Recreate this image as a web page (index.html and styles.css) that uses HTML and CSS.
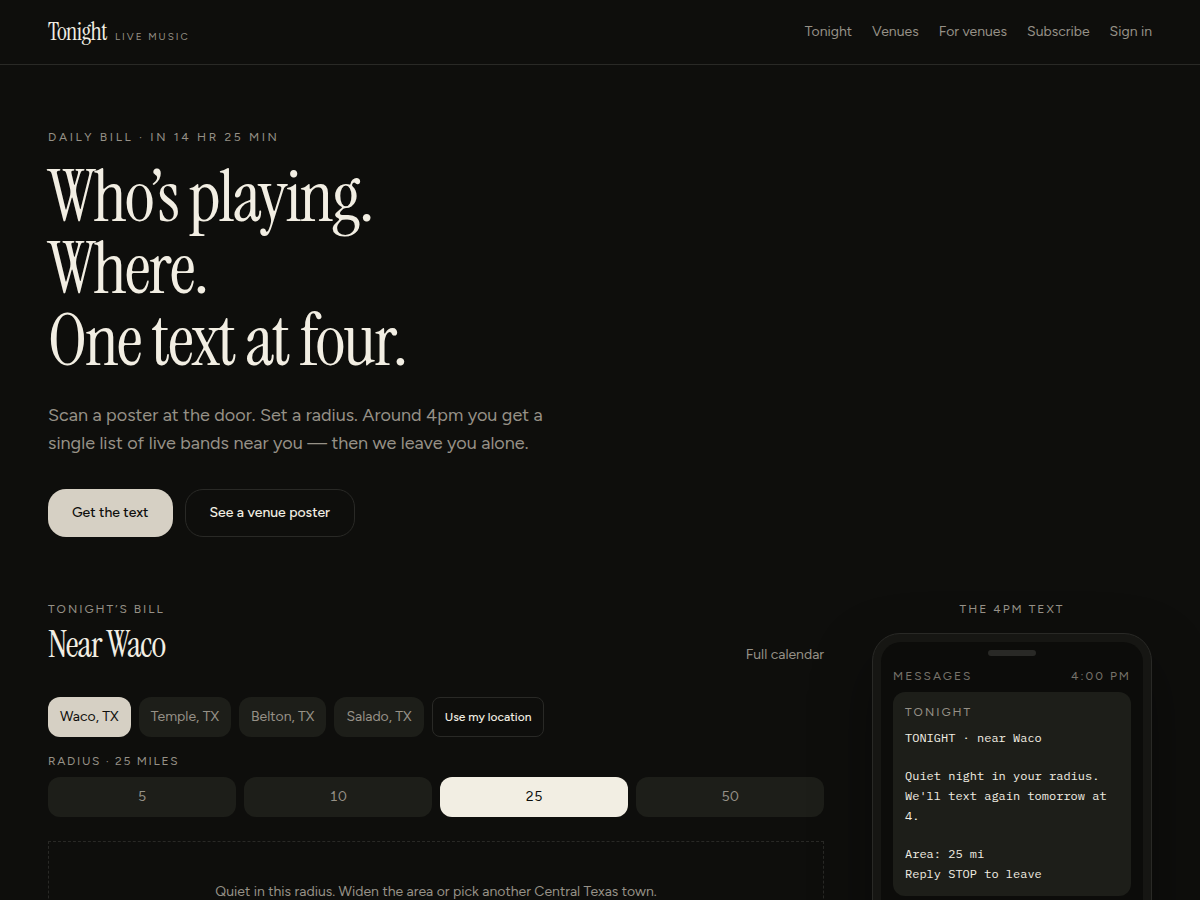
FILE: index.html
```
<!DOCTYPE html>
<html lang="en">
<head>
    <meta charset="UTF-8">
    <meta name="viewport" content="width=device-width, initial-scale=1.0">
    <title>Tonight - Live music</title>
    <link rel="stylesheet" href="styles.css">
</head>
<body>
    <header class="site-header">
        <a href="#" class="brand">
            <span class="brand-name">Tonight</span>
            <span class="brand-tag">Live music</span>
        </a>
        <nav class="site-nav">
            <a href="#bill">Tonight</a>
            <a href="#">Venues</a>
            <a href="#">For venues</a>
            <a href="#">Subscribe</a>
            <a href="#">Sign in</a>
        </nav>
    </header>

    <main class="page">
        <section class="hero">
            <p class="eyebrow">Daily bill · in 14 hr 25 min</p>
            <h1>Who’s playing.<br>Where.<br>One text at four.</h1>
            <p class="lead">Scan a poster at the door. Set a radius. Around 4pm you get a single list of live bands near you — then we leave you alone.</p>
            <div class="hero-actions">
                <button type="button" class="btn btn-primary">Get the text</button>
                <button type="button" class="btn btn-outline">See a venue poster</button>
            </div>
        </section>

        <div class="columns">
            <!-- Tonight's bill -->
            <section class="bill" id="bill">
                <p class="eyebrow">Tonight’s bill</p>
                <div class="bill-head">
                    <h2>Near Waco</h2>
                    <a href="#">Full calendar</a>
                </div>

                <div class="towns">
                    <button type="button" class="chip active">Waco, TX</button>
                    <button type="button" class="chip">Temple, TX</button>
                    <button type="button" class="chip">Belton, TX</button>
                    <button type="button" class="chip">Salado, TX</button>
                    <button type="button" class="locate">Use my location</button>
                </div>

                <p class="eyebrow radius-label" id="radius-label">Radius · 25 miles</p>
                <div class="radius" role="group" aria-labelledby="radius-label">
                    <button type="button">5</button>
                    <button type="button">10</button>
                    <button type="button" class="active">25</button>
                    <button type="button">50</button>
                </div>

                <div class="empty">
                    <p>Quiet in this radius. Widen the area or pick another Central Texas town.</p>
                </div>
            </section>

            <!-- Text message preview -->
            <aside class="preview">
                <p class="eyebrow">The 4pm text</p>
                <div class="phone">
                    <div class="screen">
                        <div class="notch"></div>
                        <div class="status">
                            <span>Messages</span>
                            <span>4:00 PM</span>
                        </div>
                        <div class="bubble">
                            <p class="sender">Tonight</p>
                            <div class="message">
                                <p>TONIGHT · near Waco</p>
                                <p>Quiet night in your radius.<br>We'll text again tomorrow at 4.</p>
                                <p>Area: 25 mi<br>Reply STOP to leave</p>
                            </div>
                        </div>
                    </div>
                </div>
            </aside>
        </div>
    </main>
</body>
</html>
```

FILE: styles.css
```
:root {
    --bg: #0e0e0c;
    --surface: #1d1e19;
    --line: #292926;
    --text: #f2eee3;
    --muted: #969187;
    --bone: #d6d0c4;
    --sans: Figtree, Lato, "Liberation Sans", sans-serif;
    --serif: "Instrument Serif", "Liberation Serif", serif;
    --mono: "IBM Plex Mono", "Liberation Mono", monospace;
}

* {
    box-sizing: border-box;
}

body {
    margin: 0;
    background: var(--bg);
    color: var(--text);
    font-family: var(--sans);
    font-size: 14px;
    line-height: 20px;
}

h1, h2, p {
    margin: 0;
}

a {
    color: inherit;
    text-decoration: none;
}

button {
    border: 0;
    padding: 0;
    font: inherit;
    cursor: pointer;
}

.eyebrow {
    color: var(--muted);
    font-size: 12px;
    line-height: 16px;
    letter-spacing: 2px;
    text-transform: uppercase;
}

/* Header */
.site-header {
    display: flex;
    align-items: center;
    justify-content: space-between;
    height: 65px;
    padding: 0 48px;
    border-bottom: 1px solid var(--line);
}

.brand {
    display: flex;
    align-items: baseline;
    gap: 8px;
}

.brand-name {
    font-family: var(--serif);
    font-size: 24px;
    line-height: 32px;
    letter-spacing: -0.025em;
}

.brand-tag {
    color: var(--muted);
    font-size: 10px;
    letter-spacing: 2px;
    text-transform: uppercase;
}

.site-nav {
    display: flex;
    gap: 20px;
    color: var(--muted);
}

.site-nav a:hover {
    color: var(--text);
}

/* Hero */
.page {
    padding: 64px 48px;
}

.hero .eyebrow {
    letter-spacing: 0.22em;
}

.hero h1 {
    margin: 16px 0 24px;
    font-family: var(--serif);
    font-size: 72px;
    font-weight: 400;
    line-height: 72px;
    letter-spacing: -0.025em;
}

.lead {
    max-width: 512px;
    color: var(--muted);
    font-size: 18px;
    line-height: 28px;
}

.hero-actions {
    display: flex;
    gap: 12px;
    margin-top: 32px;
}

.btn {
    height: 48px;
    padding: 0 24px;
    border-radius: 18px;
    font-weight: 500;
}

.btn-primary {
    background: var(--bone);
    color: var(--bg);
}

.btn-outline {
    border: 1px solid var(--line);
    background: transparent;
    color: var(--text);
}

/* Bill and phone side by side */
.columns {
    display: grid;
    grid-template-columns: minmax(0, 1fr) 280px;
    gap: 48px;
    margin-top: 64px;
}

.bill-head {
    display: flex;
    align-items: flex-end;
    justify-content: space-between;
    margin: 8px 0 32px;
}

.bill-head h2 {
    font-family: var(--serif);
    font-size: 36px;
    font-weight: 400;
    line-height: 40px;
    letter-spacing: -1px;
}

.bill-head a {
    color: var(--muted);
}

.towns {
    display: flex;
    flex-wrap: wrap;
    gap: 8px;
}

.chip,
.radius button {
    height: 40px;
    border-radius: 12px;
    background: var(--surface);
    color: var(--muted);
}

.chip {
    padding: 0 12px;
}

.chip.active {
    background: var(--bone);
    color: var(--bg);
}

.locate {
    height: 40px;
    padding: 0 12px;
    border: 1px solid var(--line);
    border-radius: 8px;
    background: transparent;
    color: var(--text);
    font-size: 12px;
    font-weight: 500;
}

.radius-label {
    margin: 16px 0 8px;
    letter-spacing: 0.14em;
}

.radius {
    display: grid;
    grid-template-columns: repeat(4, 1fr);
    gap: 8px;
    font-variant-numeric: tabular-nums;
}

.radius button {
    font-variant-numeric: inherit;
}

.radius button.active {
    background: var(--text);
    color: var(--bg);
}

.empty {
    margin-top: 24px;
    padding: 40px 24px;
    border: 1px dashed var(--line);
    color: var(--muted);
    text-align: center;
}

/* Phone */
.preview {
    text-align: center;
}

.phone {
    margin-top: 16px;
    padding: 8px;
    border: 1px solid var(--line);
    border-radius: 28px;
    background: #161613;
    box-shadow: 0 24px 60px rgba(0, 0, 0, 0.35);
    text-align: left;
}

.screen {
    min-height: 420px;
    padding: 8px 12px;
    border-radius: 20px;
    background: #0c0c0a;
}

.notch {
    width: 48px;
    height: 6px;
    margin: 0 auto 12px;
    border-radius: 3px;
    background: var(--line);
}

.status {
    display: flex;
    justify-content: space-between;
    color: #77736a;
    font-size: 12px;
    line-height: 16px;
    letter-spacing: 2px;
    text-transform: uppercase;
}

.bubble {
    margin-top: 8px;
    padding: 12px;
    border-radius: 12px;
    background: var(--surface);
}

.sender {
    margin-bottom: 8px;
    color: var(--muted);
    font-size: 12px;
    line-height: 16px;
    letter-spacing: 2px;
    text-transform: uppercase;
}

.message {
    display: flex;
    flex-direction: column;
    gap: 18px;
    font-family: var(--mono);
    font-size: 12px;
    line-height: 20px;
}

@media (max-width: 860px) {
    .columns {
        grid-template-columns: 1fr;
    }

    .phone {
        max-width: 280px;
        margin-left: auto;
        margin-right: auto;
    }
}
```
